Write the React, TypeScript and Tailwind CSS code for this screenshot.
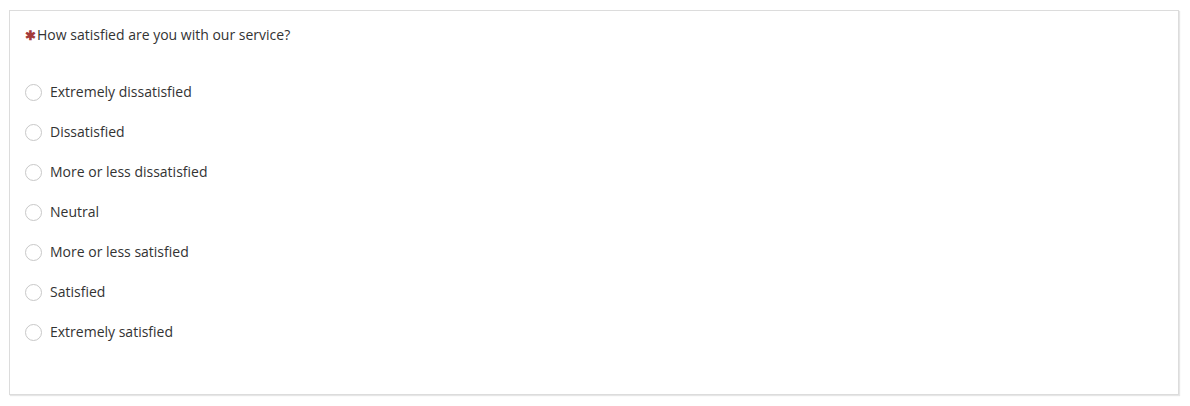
const options = [
  "Extremely dissatisfied",
  "Dissatisfied",
  "More or less dissatisfied",
  "Neutral",
  "More or less satisfied",
  "Satisfied",
  "Extremely satisfied",
]

export default function App() {
  return (
    <div className="w-[1190px] h-[406px] bg-white pt-[10px] pl-[9px] font-['Open_Sans',sans-serif] text-[14px] text-[#333]">
      <div className="w-[1170px] h-[385px] border border-[#dcdcdc] shadow-[1px_1px_1px_#e6e6e6] bg-white pl-[15px] pt-[14px]">
        <div className="flex items-center h-5 leading-5">
          <span className="text-[#a33a3a] text-[13px] font-bold mr-[1px]">✱</span>
          <span>How satisfied are you with our service?</span>
        </div>
        <div className="mt-[27px] flex flex-col">
          {options.map((label) => (
            <label key={label} className="flex items-center h-10 leading-5">
              <span className="w-[17px] h-[17px] rounded-full border border-[#c8c8c8] bg-white shrink-0" />
              <span className="ml-[8px]">{label}</span>
            </label>
          ))}
        </div>
      </div>
    </div>
  )
}
